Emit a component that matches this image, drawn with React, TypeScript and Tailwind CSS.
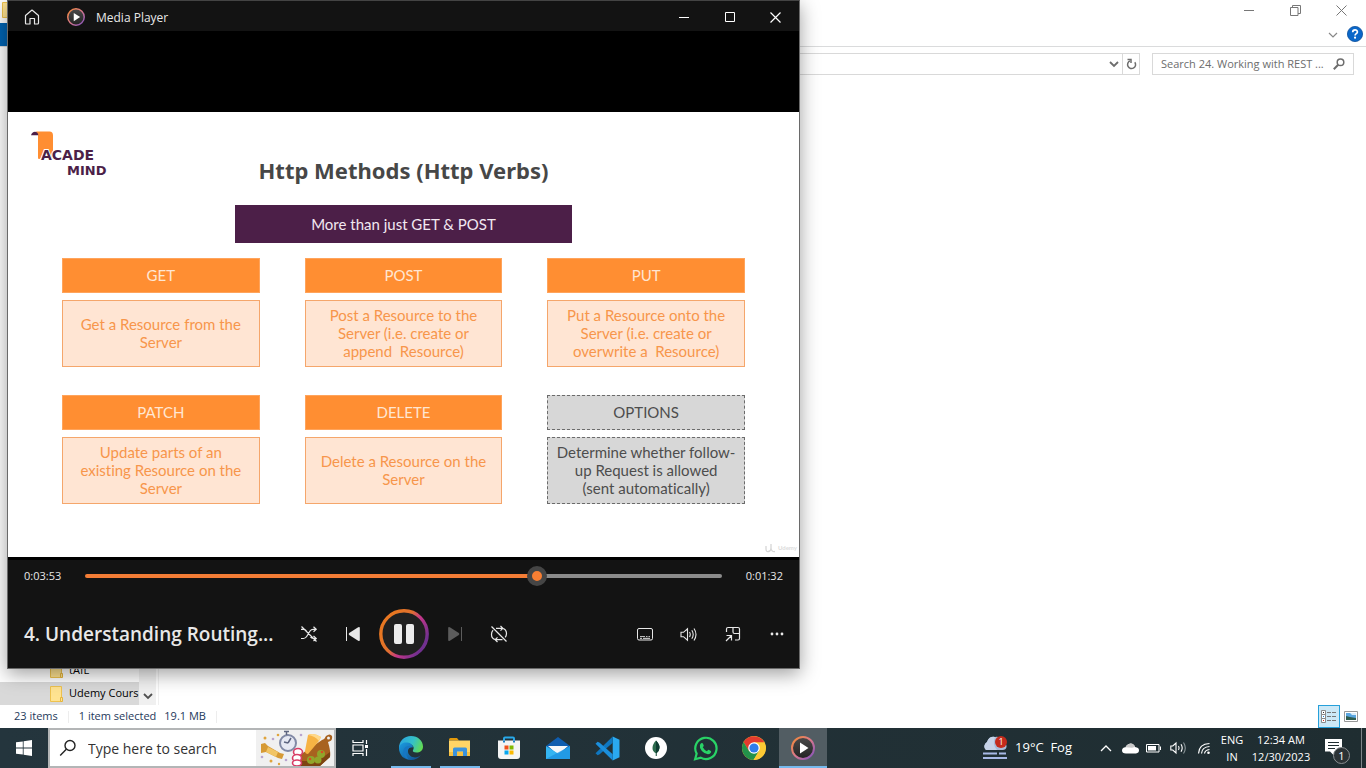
import React from "react";

const UI = "font-['Open_Sans','Noto_Sans',sans-serif]";

/* ---------- File Explorer ---------- */

function Folder() {
  return (
    <svg width="14" height="16" viewBox="0 0 14 16" className="shrink-0" aria-hidden="true">
      <path d="M.5.5h11v15H.5z" fill="#ffe391" stroke="#eec24e" />
      <path d="M10.5 11.5h2v4h-2z" fill="#ffe391" stroke="#e5b53c" />
    </svg>
  );
}

function Explorer() {
  return (
    <section aria-label="File Explorer" className="flex flex-1 flex-col bg-white text-[11px]">
      <header className="flex h-[23px] items-center pb-[3px] pl-[2px] pr-[2px]">
        <Folder />
        <div className="ml-auto flex text-[#777]">
          <button aria-label="Minimize" className="flex h-5 w-[46px] items-center justify-center">
            <svg width="10" height="10" stroke="currentColor"><path d="M0 5.5h10" /></svg>
          </button>
          <button aria-label="Restore" className="flex h-5 w-[46px] items-center justify-center">
            <svg width="11" height="11" stroke="currentColor" fill="none">
              <path d="M.5 2.500h7.500v8h-7.500zM2.500 2.500v-2h8v8h-2.500" />
            </svg>
          </button>
          <button aria-label="Close" className="flex h-5 w-[46px] items-center justify-center">
            <svg width="11" height="11" stroke="currentColor"><path d="M.5.5l10 10M10.500.5l-10 10" /></svg>
          </button>
        </div>
      </header>

      <div className="flex h-6 items-center border-b border-[#dadbdc] pr-[3px]">
        <button className="h-full w-14 bg-[#0063b1] text-white">File</button>
        <button aria-label="Expand the ribbon" className="ml-auto mr-[6px] flex size-4 items-center justify-center text-[#888]">
          <svg width="10" height="6" fill="none" stroke="currentColor" strokeWidth="1.200"><path d="M1 1l4 4 4-4" /></svg>
        </button>
        <button aria-label="Help" className="pb-[2px]">
          <svg width="16" height="16" viewBox="0 0 16 16">
            <circle cx="8" cy="8" r="7.600" fill="#0a67c9" stroke="#0b4f9c" strokeWidth=".8" />
            <path d="M5.700 6.200c0-3.200 4.700-3 4.700-.3 0 1.700-2.300 1.700-2.300 3.500" fill="none" stroke="#fff" strokeWidth="1.700" />
            <circle cx="8.050" cy="11.700" r="1.100" fill="#fff" />
          </svg>
        </button>
      </div>

      <div className="flex h-[34px] items-center gap-3 px-3 text-[#6d6d6d]">
        <div className="flex h-[22px] flex-1 items-center justify-end border border-[#d9d9d9]">
          <button aria-label="Previous locations" className="flex h-full w-4 items-center justify-center">
            <svg width="10" height="7" fill="none" stroke="currentColor" strokeWidth="1.800"><path d="M1 1l4 4 4-4" /></svg>
          </button>
          <button aria-label="Refresh" className="flex h-full w-[17px] items-center justify-center border-l border-[#d9d9d9]">
            <svg width="11" height="12" viewBox="0 0 11 12" fill="none" stroke="currentColor" strokeWidth="1.500">
              <path d="M8.800 4.200a4 4 0 1 1-4.800-1.300" />
              <path d="M5 5V1.500H1.500" />
            </svg>
          </button>
        </div>
        <div className="flex h-[22px] w-[202px] items-center border border-[#d9d9d9] pl-2 pr-2">
          <input
            aria-label="Search folder"
            placeholder="Search 24. Working with REST ..."
            className="h-full min-w-0 flex-1 bg-transparent pb-[2px] outline-none placeholder:text-[#6d6d6d]"
          />
          <svg width="12" height="12" viewBox="0 0 12 12" fill="none" stroke="currentColor" strokeWidth="1.500" aria-hidden="true">
            <circle cx="7.500" cy="4.300" r="3.300" />
            <path d="M5.200 6.700L.8 11.200" strokeWidth="2" />
          </svg>
        </div>
      </div>

      <div className="flex flex-1">
        <nav aria-label="Folders" className="flex w-[139px] flex-col justify-end text-black">
          <button className="flex h-6 items-center gap-[5px] pl-[50px]">
            <Folder />
            tAfL
          </button>
          <button className="flex h-[23px] items-center gap-[5px] whitespace-nowrap bg-[#d9d9d9] pl-[50px]">
            <Folder />
            Udemy Cours
          </button>
        </nav>
        <div className="flex w-[17px] items-end justify-center bg-[#f0f0f0] pb-[5px] text-[#505050]">
          <svg width="10" height="7" fill="none" stroke="currentColor" strokeWidth="1.800"><path d="M1 1l4 4 4-4" /></svg>
        </div>
        <main className="ml-[2px] flex-1 border-l border-[#f0f0f0]" />
      </div>

      <footer className="flex h-[23px] items-center pl-[14px] pr-2 text-[#1e395b]">
        <span>23 items</span>
        <span className="ml-[10px] h-3 w-px bg-[#ededed]" />
        <span className="ml-[10px]">1 item selected</span>
        <span className="ml-2">19.1 MB</span>
        <span className="ml-[10px] h-3 w-px bg-[#ededed]" />
        <button aria-label="Details view" className="ml-auto flex h-[23px] w-[22px] items-center justify-center border border-[#26a0da] bg-[#cce8f6]">
          <svg width="16" height="14" viewBox="0 0 16 14" fill="#fff">
            <path d="M.5.5h4v4h-4zM.5 4.500h4v4h-4zM.5 8.500h4v4h-4z" stroke="#8a8a8a" />
            <path d="M2 2h1v1h-1z" fill="#333" /><path d="M2 6h1v1h-1z" fill="#1b7ed0" /><path d="M2 10h1v1h-1z" fill="#d02b1b" />
            <path d="M6 2.500h4M11 2.500h4M6 6.500h4M11 6.500h4M6 10.500h4M11 10.500h4" stroke="#777" />
          </svg>
        </button>
        <button aria-label="Large icons view" className="ml-1">
          <svg width="14" height="11" viewBox="0 0 14 11">
            <path d="M.5.5h13v10h-13z" fill="#fff" stroke="#999" />
            <path d="M2 2h10v7H2z" fill="#5aa6e0" />
            <path d="M2 5l4 1 6 1v2H2z" fill="#2f5d4f" />
            <path d="M6 2h6v2L8 4z" fill="#d8ecfa" />
          </svg>
        </button>
      </footer>
    </section>
  );
}

/* ---------- Slide shown in the video ---------- */

type Method = { name: string; lines: string[]; muted?: boolean };

const methods: Method[] = [
  { name: "GET", lines: ["Get a Resource from the", "Server"] },
  { name: "POST", lines: ["Post a Resource to the", "Server (i.e. create or", "append  Resource)"] },
  { name: "PUT", lines: ["Put a Resource onto the", "Server (i.e. create or", "overwrite a  Resource)"] },
  { name: "PATCH", lines: ["Update parts of an", "existing Resource on the", "Server"] },
  { name: "DELETE", lines: ["Delete a Resource on the", "Server"] },
  { name: "OPTIONS", lines: ["Determine whether follow-", "up Request is allowed", "(sent automatically)"], muted: true },
];

function MethodCard({ name, lines, muted }: Method) {
  const head = muted
    ? "border border-dashed border-[#6b6b6b] bg-[#d7d7d7] text-[#4d4d4d]"
    : "border border-[#ffa45c] bg-[#ff8e32] text-[#ffe6d2]";
  const body = muted
    ? "border border-dashed border-[#6b6b6b] bg-[#d7d7d7] text-[#4d4d4d]"
    : "border border-[#f5a66b] bg-[#ffe5d3] text-[#f7964b]";
  return (
    <article className="flex flex-col gap-[7px] text-center">
      <h3 className={`flex h-[35px] items-center justify-center ${head}`}>{name}</h3>
      <p className={`flex h-[67px] flex-col items-center justify-center whitespace-pre pb-px leading-[18px] ${body}`}>
        {lines.map((line) => (
          <span key={line}>{line}</span>
        ))}
      </p>
    </article>
  );
}

function AcademindLogo() {
  return (
    <svg width="78" height="46" viewBox="0 0 78 46" role="img" aria-label="Academind">
      <path d="M5 .5h13.500q3.500 0 3.500 4V28l-3-2H11.500L8.500 28q-1.500.5-1.500-1.500V4z" fill="#ff8e32" />
      <path d="M0 4.300Q1 .8 4 .7q3 .1 3.300 3.600z" fill="#4c1f48" />
      <g fill="#4c1f48" fontFamily="DejaVu Sans" fontWeight="700" fontSize="13">
        <text x="10" y="29" fontSize="14" stroke="#fff" strokeWidth="2" paintOrder="stroke">ACADE</text>
        <text x="36" y="44">MIND</text>
      </g>
    </svg>
  );
}

function Slide() {
  return (
    <div className="relative flex aspect-video flex-col items-center bg-white pt-[19px] font-[Lato,sans-serif] text-[15px] [font-variant-ligatures:none]">
      <div className="grid h-[53px] w-full grid-cols-[1fr_auto_1fr] pl-[23px] pr-[23px]">
        <AcademindLogo />
        <h1 className="self-end font-['Noto_Sans',sans-serif] text-[22px] font-bold leading-[28px] text-[#474747]">
          Http Methods (Http Verbs)
        </h1>
      </div>
      <h2 className="mt-[21px] flex h-[38px] w-[337px] items-center justify-center bg-[#4c1f48] text-[#f2e8f1]">
        More than just GET &amp; POST
      </h2>
      <div className="mt-[15px] grid w-full grid-cols-3 gap-x-[45px] gap-y-7 px-[54px]">
        {methods.map((m) => (
          <MethodCard key={m.name} {...m} />
        ))}
      </div>
      <div className="absolute bottom-[3px] right-[2px] flex items-center gap-[2px] text-[#dcdcdc]">
        <svg width="11" height="10" viewBox="0 0 11 10" fill="none" stroke="#d6d6d6" strokeWidth="1.300">
          <path d="M1 3v3q0 3 2.500 2.500T6 5V1M6 5q.3 4 4 3.500" />
        </svg>
        <span className="text-[6px] font-bold leading-3">Udemy</span>
      </div>
    </div>
  );
}

/* ---------- Media Player ---------- */

function PlayerLogo({ size }: { size: number }) {
  return (
    <svg width={size} height={size} viewBox="0 0 24 24" aria-hidden="true">
      <defs>
        <linearGradient id="ring" x1="0" y1="0" x2="1" y2="1">
          <stop offset="0" stopColor="#f48a33" />
          <stop offset=".5" stopColor="#d9788c" />
          <stop offset="1" stopColor="#7b4fc0" />
        </linearGradient>
        <linearGradient id="disc" x1="0" y1="0" x2="0" y2="1">
          <stop offset="0" stopColor="#4a4a4a" />
          <stop offset="1" stopColor="#222" />
        </linearGradient>
      </defs>
      <circle cx="12" cy="12" r="11" fill="url(#disc)" stroke="url(#ring)" strokeWidth="2" />
      <path d="M9 6.500v11l8.500-5.500z" fill="#fff" />
    </svg>
  );
}

function CtlButton({ label, children, dim }: { label: string; children: React.ReactNode; dim?: boolean }) {
  return (
    <button aria-label={label} className={`flex h-11 w-11 items-center justify-center ${dim ? "text-[#5c5c5c]" : "text-[#e8e8e8]"}`}>
      {children}
    </button>
  );
}

function MediaPlayer() {
  return (
    <section
      aria-label="Media Player"
      className="absolute left-[7px] top-0 w-[58.05%] border border-[#6a6a6a] border-t-[#444] bg-black text-[#e8e8e8] shadow-[0_5px_18px_rgba(0,0,0,0.38)]"
    >
      <header className="flex h-[30px] items-center bg-[#131313] pt-[2px]">
        <button aria-label="Home" className="flex h-full w-12 items-center justify-center">
          <svg width="16" height="16" viewBox="0 0 16 16" fill="none" stroke="#e8e8e8" strokeWidth="1.200" strokeLinejoin="round">
            <path d="M1.500 6.500L8 1l6.500 5.500V14q0 1-1 1H10.500V9.500h-4.500V15H2.500q-1 0-1-1z" />
          </svg>
        </button>
        <div className="ml-[11px] flex items-center gap-[11px]">
          <PlayerLogo size={18} />
          <span className="pt-px text-xs leading-4">Media Player</span>
        </div>
        <div className="ml-auto flex h-full text-white">
          <button aria-label="Minimize" className="flex w-[46px] items-center justify-center">
            <svg width="10" height="10" stroke="currentColor"><path d="M0 5.500h10" /></svg>
          </button>
          <button aria-label="Maximize" className="flex w-[46px] items-center justify-center">
            <svg width="10" height="10" stroke="currentColor" fill="none"><path d="M.5.5h9v9h-9z" /></svg>
          </button>
          <button aria-label="Close" className="flex w-[46px] items-center justify-center">
            <svg width="11" height="11" stroke="currentColor" strokeWidth="1.200"><path d="M.5.500l10 10M10.500.5l-10 10" /></svg>
          </button>
        </div>
      </header>

      <div className="pb-[3px] pt-[81px]">
        <Slide />
      </div>

      <div className="bg-[#131313]">
        <div className="flex h-8 items-center px-4 text-[11px]">
          <span className="w-[61px]">0:03:53</span>
          <input
            type="range"
            aria-label="Seek"
            min={0}
            max={325}
            defaultValue={233}
            className="h-5 min-w-0 flex-1 appearance-none bg-transparent [&::-webkit-slider-runnable-track]:h-1 [&::-webkit-slider-runnable-track]:rounded-full [&::-webkit-slider-runnable-track]:bg-[linear-gradient(to_right,#f47d36_71%,#8b8b8b_71%)] [&::-webkit-slider-thumb]:mt-[-8px] [&::-webkit-slider-thumb]:size-5 [&::-webkit-slider-thumb]:appearance-none [&::-webkit-slider-thumb]:rounded-full [&::-webkit-slider-thumb]:border-[5px] [&::-webkit-slider-thumb]:border-[#454545] [&::-webkit-slider-thumb]:bg-[#f97f33]"
          />
          <span className="w-[61px] text-right">0:01:32</span>
        </div>

        <div className="grid h-[76px] grid-cols-[1fr_auto_1fr] items-center pt-[9px]">
          <h2 className="min-w-0 whitespace-nowrap pl-4 text-[19px] font-semibold leading-6">4. Understanding Routing...</h2>
          <div className="flex items-center pl-px">
            <CtlButton label="Shuffle off">
              <svg width="18" height="18" viewBox="0 0 18 18" fill="none" stroke="currentColor" strokeWidth="1.200">
                <path d="M1 13.500h2.500q2 0 3.500-2.500l3-5q1.200-1.700 3.200-1.700H16M13.500 1.800L16.200 4.300 13.500 6.800M1 4.300h2.500q2 0 3 1.700M10.500 12q1 1.500 2.800 1.500H16M13.500 11l2.700 2.500-2.700 2.500M1.500 1.500l15 15" />
              </svg>
            </CtlButton>
            <CtlButton label="Previous">
              <svg width="16" height="16" viewBox="0 0 16 16" fill="currentColor">
                <path d="M1 1h1v14H1z" />
                <path d="M13.200 1.200q1.600-.8 1.600.8v12q0 1.600-1.600.8L4.200 8.900q-1.100-.9 0-1.800z" />
              </svg>
            </CtlButton>
            <button aria-label="Pause" className="flex w-[58px] items-center justify-center">
              <svg width="50" height="50" viewBox="0 0 50 50">
                <defs>
                  <linearGradient id="pauseRing" x1=".15" y1=".3" x2=".9" y2=".75">
                    <stop offset="0" stopColor="#e87722" />
                    <stop offset=".35" stopColor="#e0702f" />
                    <stop offset=".6" stopColor="#c3368a" />
                    <stop offset="1" stopColor="#71308f" />
                  </linearGradient>
                </defs>
                <circle cx="25" cy="25" r="23.200" fill="#202020" stroke="url(#pauseRing)" strokeWidth="3.400" />
                <rect x="15" y="15" width="8" height="20" rx="2" fill="#ececec" />
                <rect x="27" y="15" width="8" height="20" rx="2" fill="#ececec" />
              </svg>
            </button>
            <CtlButton label="Next" dim>
              <svg width="16" height="16" viewBox="0 0 16 16" fill="currentColor">
                <path d="M14 1h1v14h-1z" />
                <path d="M2.800 1.200q-1.600-.8-1.600.8v12q0 1.600 1.600.8L11.800 8.900q1.100-.9 0-1.800z" />
              </svg>
            </CtlButton>
            <CtlButton label="Repeat off">
              <svg width="18" height="18" viewBox="0 0 18 18" fill="none" stroke="currentColor" strokeWidth="1.200">
                <path d="M6 3.300h6.500q4 1 4 5.200 0 2-1.300 3.800M10.500 1l2.300 2.300-2.300 2.300M12.500 14.700H5.500q-4-1-4-5.200 0-2.600 1.600-4.300M7.500 12.400l-2.300 2.300L7.500 17M1.500 1.500l15 15" />
              </svg>
            </CtlButton>
          </div>
          <div className="flex justify-end">
            <CtlButton label="Subtitles">
              <svg width="16" height="13" viewBox="0 0 16 13" fill="none" stroke="currentColor">
                <rect x=".5" y=".5" width="15" height="11.500" rx="1.500" />
                <path d="M3 8.500h5M9 8.500h1.500M11.500 8.500H13M3 10.300h2M6 10.300h7" strokeWidth="1.200" opacity=".8" />
              </svg>
            </CtlButton>
            <CtlButton label="Volume">
              <svg width="18" height="15" viewBox="0 0 18 15" fill="none" stroke="currentColor" strokeWidth="1.100">
                <path d="M1 5.300h2.500L7.500 1.800v11.400L3.500 9.700H1zM9.500 5q1.500 2.500 0 5M11.800 3.300q2.800 4.200 0 8.400M14 1.500q4 6 0 12" />
              </svg>
            </CtlButton>
            <CtlButton label="Mini player">
              <svg width="16" height="16" viewBox="0 0 16 16" fill="none" stroke="currentColor" strokeWidth="1.200">
                <path d="M1.500 6V3q0-1.500 1.500-1.500h10q1.500 0 1.500 1.500v9.500q0 1.500-1.500 1.500H10M8 1.500V6q0 1.500 1.500 1.500h5M1.500 9.500h5v5M6.500 9.500L1 15" />
              </svg>
            </CtlButton>
            <CtlButton label="More options">
              <svg width="14" height="4" viewBox="0 0 14 4" fill="currentColor">
                <circle cx="2" cy="2" r="1.400" /><circle cx="7" cy="2" r="1.400" /><circle cx="12" cy="2" r="1.400" />
              </svg>
            </CtlButton>
          </div>
        </div>
      </div>
    </section>
  );
}

/* ---------- Taskbar ---------- */

function SearchArt() {
  return (
    <svg width="78" height="36" viewBox="0 0 78 36" aria-hidden="true" className="shrink-0">
      <path d="M0 0h78v36H0z" fill="#f0f0f0" />
      <path d="M38 29L66 10q3-1 4-4 4-3 6 0 1 5-4 6 3 10 2 15L64 36H39z" fill="#a8621f" />
      <path d="M38 29l2 7h24l10-9v-5L62 31H42z" fill="#7d4412" />
      <circle cx="72.500" cy="8" r="1.500" fill="#f0f0f0" />
      <path d="M52 5q5-3 13 2l-2 4-11 13q-3 0-3-3z" fill="#f7b344" />
      <path d="M52 5q7 1 11 6l2-4q-7-5-13-2z" fill="#ffd98a" />
      <circle cx="32" cy="13" r="8" fill="#e6e9f3" stroke="#8189a5" strokeWidth="2" />
      <path d="M28 1.500h5M30.500 1v4M32 13l3-5M32 13l-4-1" stroke="#5d6580" strokeWidth="1.500" />
      <path d="M5 14l4-1 3 3 12 7 4 1-2 5-4-1-12-6-5 1z" fill="#d69a35" />
      <path d="M12 17l10 5-2 5-10-5z" fill="#f1c566" />
      <g fill="#fff" stroke="#d83b64" strokeWidth="1.600">
        <ellipse cx="42" cy="22" rx="4.500" ry="3.500" /><ellipse cx="41" cy="28" rx="4.500" ry="3.500" /><ellipse cx="41" cy="33" rx="4.500" ry="3" />
      </g>
      <g fill="#91a52b">
        <circle cx="55" cy="30" r="4" /><circle cx="65" cy="24" r="4" /><circle cx="62" cy="30" r="3.500" />
      </g>
      <g fill="#d94a24"><circle cx="54" cy="29" r="1.300" /><circle cx="66" cy="22" r="1.300" /></g>
      <g fill="#e0a43c"><circle cx="9" cy="8" r="1.500" /><circle cx="22" cy="5" r="1.300" /><circle cx="15" cy="31" r="1.500" /><circle cx="23" cy="34" r="1.200" /></g>
      <g fill="#b9a4cf"><circle cx="17" cy="9" r="1.300" /><circle cx="6" cy="27" r="1.300" /><circle cx="30" cy="30" r="1.300" /><circle cx="45" cy="5" r="1.300" /></g>
    </svg>
  );
}

const Edge = () => (
  <svg width="26" height="26" viewBox="0 0 26 26">
    <defs>
      <linearGradient id="edgeTop" x1="0" y1=".3" x2="1" y2=".6"><stop offset="0" stopColor="#2aa5e0" /><stop offset=".55" stopColor="#35c1c8" /><stop offset="1" stopColor="#63dc50" /></linearGradient>
      <linearGradient id="edgeLow" x1="0" y1="0" x2="1" y2="1"><stop offset="0" stopColor="#1b9de2" /><stop offset="1" stopColor="#114a8b" /></linearGradient>
    </defs>
    <path d="M1 13C1 6 6 1 13 1s12 5 12 10.500c0 4-3 6-6.500 6-3 0-4.300-1.200-3.500-2.300 2-3-.5-6.200-4.500-6.200C5 9 1.500 12 1 16z" fill="url(#edgeTop)" />
    <path d="M1 13c.5-4 4.500-6 8.500-5.500 3 .4 5.500 2.500 5.500 5-5-2-7 5-2.500 8.500 3.500 2.500 8 1.500 10.500-1C20.500 23.500 17 25 13 25 6 25 1 20 1 13z" fill="url(#edgeLow)" />
    <path d="M15 12.500c-6-1.500-9 6-4.500 12C6 23 4.500 18.500 5.500 15c1.200-4 6-5.500 9.500-2.500z" fill="#1677c4" />
  </svg>
);

const Files = () => (
  <svg width="24" height="22" viewBox="0 0 24 22">
    <path d="M1 4V2.500Q1 1 2.500 1H9l2 2.500H1z" fill="#e39a0b" />
    <path d="M1 3.500h21v15.500H1z" fill="#ffd566" />
    <path d="M1 15h21v4H1z" fill="#f6c140" />
    <path d="M5 19v-7q0-1.500 1.500-1.500h11Q19 10.500 19 12v7h-4v-4.500H9V19z" fill="#3a93dc" />
  </svg>
);

const Store = () => (
  <svg width="24" height="24" viewBox="0 0 24 24">
    <path d="M7 6V2.500Q7 1.500 8 1.500h8q1 0 1 1V6" fill="none" stroke="#28a8e8" strokeWidth="2" />
    <path d="M1 4.500h22V20q0 3-3 3H4q-3 0-3-3z" fill="#f4f4f4" />
    <path d="M7 4.500v2M17 4.500v2" stroke="#1b7fc4" strokeWidth="2" />
    <path d="M7.500 9.500h4v4h-4z" fill="#f1511b" /><path d="M12.500 9.500h4v4h-4z" fill="#80b900" />
    <path d="M7.500 14.500h4v4h-4z" fill="#05a6f0" /><path d="M12.500 14.500h4v4h-4z" fill="#fbb900" />
  </svg>
);

const Mail = () => (
  <svg width="26" height="24" viewBox="0 0 26 24">
    <path d="M1 10L13 1l12 9-4 5H5z" fill="#0f5db0" />
    <path d="M3 10h20l-10 9z" fill="#f5f7fa" />
    <path d="M1 10l12 7.500L25 10v13H1z" fill="#35b5f2" />
    <path d="M1 23L25 10v13z" fill="#1b8fe0" opacity=".7" />
  </svg>
);

const Code = () => (
  <svg width="25" height="25" viewBox="0 0 24 24">
    <path d="M17 0.500L23.500 3.500v17L17 23.500z" fill="#2aa9f0" />
    <path d="M17 .5v6L4.500 17.500 2.500 18.500.5 16.500z" fill="#0f77c0" />
    <path d="M17 23.500v-6L4.500 6.500 2.500 5.500.5 7.500z" fill="#1b8fdc" />
  </svg>
);

const Mongo = () => (
  <svg width="24" height="24" viewBox="0 0 24 24">
    <circle cx="12" cy="12" r="11" fill="#fff" />
    <path d="M12 4.500q4 4 3.500 7.500-.3 3.500-3 5.200V20h-.8v-2.800Q8.500 15.500 8.500 12 8.500 8 12 4.500z" fill="#2c6b4c" />
    <path d="M12 4.500v15.500h.5v-2.800q2.700-1.700 3-5.200Q16 8.500 12 4.500z" fill="#0f3d33" />
  </svg>
);

const WhatsApp = () => (
  <svg width="25" height="25" viewBox="0 0 24 24">
    <path d="M2 22.300l1.500-5.400A10.200 10.200 0 1 1 7.400 20.800z" fill="none" stroke="#29d366" strokeWidth="2.100" />
    <path d="M8.300 6.700q.9-.3 1.300.7l.7 1.700q.2.500-.9 1.700 1.400 2.700 4 3.800.9-1.200 1.400-1.400.3 0 2.300 1.100.6.500.1 1.600-.8 1.700-2.900 1.600-3.200-.4-5.800-3.200Q6 11.500 6.600 8.800q.5-1.600 1.700-2.100z" fill="#29d366" />
  </svg>
);

const Chrome = () => (
  <svg width="24" height="24" viewBox="0 0 24 24">
    <circle cx="12" cy="12" r="12" fill="#fcc934" />
    <path d="M1.600 6A12 12 0 0 1 22.400 6.500H12L6.800 15z" fill="#e33b2e" />
    <path d="M1.600 6A12 12 0 0 0 11.500 24L17 15l-10 0z" fill="#23924a" />
    <path d="M12 6.500h10.400A12 12 0 0 1 11.500 24L17 15z" fill="#fcc934" />
    <circle cx="12" cy="12" r="5.800" fill="#fff" />
    <circle cx="12" cy="12" r="4.600" fill="#2f7de9" />
  </svg>
);

const apps = [
  { name: "Microsoft Edge", icon: <Edge />, state: "open" },
  { name: "File Explorer", icon: <Files />, state: "open" },
  { name: "Microsoft Store", icon: <Store />, state: "idle" },
  { name: "Mail", icon: <Mail />, state: "idle" },
  { name: "Visual Studio Code", icon: <Code />, state: "idle" },
  { name: "MongoDB Compass", icon: <Mongo />, state: "idle" },
  { name: "WhatsApp", icon: <WhatsApp />, state: "idle" },
  { name: "Google Chrome", icon: <Chrome />, state: "idle" },
  { name: "Media Player", icon: <PlayerLogo size={24} />, state: "active" },
];

function Taskbar() {
  return (
    <footer className="flex h-10 items-stretch bg-linear-to-r from-[#24353d] to-[#1f2d31] text-white">
      <button aria-label="Start" className="flex w-12 items-center justify-center">
        <svg width="16" height="16" viewBox="0 0 16 16" fill="#fff">
          <path d="M0 2.300l6.800-.9v6.200H0zM7.600 1.300L16 0v7.600H7.600zM0 8.400h6.800v6.200L0 13.700zM7.600 8.400H16V16l-8.400-1.200z" />
        </svg>
      </button>
      <label className="flex w-72 items-center border-2 border-[#b3b5b6] bg-white text-[#2b2b2b]">
        <svg width="18" height="18" viewBox="0 0 18 18" fill="none" stroke="#222" strokeWidth="1.400" className="ml-[9px] shrink-0" aria-hidden="true">
          <circle cx="11" cy="6.500" r="5" />
          <path d="M7.300 10.200L1.200 16.500" />
        </svg>
        <input
          aria-label="Type here to search"
          placeholder="Type here to search"
          className="ml-[11px] h-full min-w-0 flex-1 bg-transparent text-sm outline-none placeholder:text-[#333]"
        />
        <SearchArt />
      </label>
      <button aria-label="Task View" className="flex w-12 items-center justify-center">
        <svg width="17" height="16" viewBox="0 0 17 16" fill="none" stroke="#fff" strokeWidth="1.200">
          <path d="M1 0v2.500h10V0M1 16v-2.500h10V16M1 5h10v6H1zM14.500 0v4M14.500 9v7" />
          <path d="M13 5h3v3h-3z" fill="#fff" stroke="none" />
        </svg>
      </button>
      <div className="ml-[3px] flex gap-px">
        {apps.map((app) => (
          <button
            key={app.name}
            aria-label={app.name}
            className={
              app.state === "active"
                ? "flex w-12 flex-col items-center bg-[#525d63]"
                : "flex w-12 flex-col items-center"
            }
          >
            <span className="flex h-[38px] items-center pt-[2px]">{app.icon}</span>
            {app.state === "active" && <span className="h-[2px] w-full bg-[#76b9ed]" />}
            {app.state === "open" && <span className="h-[2px] w-10 bg-[#76b9ed]" />}
          </button>
        ))}
      </div>

      <div className="ml-auto flex items-center pr-1">
        <button className="mr-[22px] flex items-center gap-[7px] whitespace-pre text-[13px]">
          <svg width="26" height="26" viewBox="0 0 26 26" aria-hidden="true">
            <path d="M4 15a5 5 0 0 1 1-8q2-6 8-5 6-1 7 5 5 1 4.500 5-.5 3-4 3z" fill="#a9bbd8" />
            <path d="M4 15q-4-4 1-8 2-6 8-5-3 8 2 13z" fill="#c6d3e8" />
            <path d="M1 18.500h14M17 18.500h7M1 23h24" stroke="#a8b9e6" strokeWidth="2" />
            <circle cx="19" cy="7" r="6" fill="#c42b1c" />
            <text x="19" y="10" fontSize="9" fill="#fff" textAnchor="middle" fontFamily="Open Sans">1</text>
          </svg>
          19°C  Fog
        </button>
        <button aria-label="Show hidden icons" className="flex w-6 justify-center">
          <svg width="12" height="8" fill="none" stroke="#fff" strokeWidth="1.300"><path d="M1 7l5-5 5 5" /></svg>
        </button>
        <button aria-label="OneDrive" className="flex w-6 justify-center">
          <svg width="17" height="11" viewBox="0 0 17 11">
            <path d="M4 10.500q-4 0-4-3t3.500-3.200Q5 1 8.500.5 12 .5 13 4q4 .5 4 3.300t-3 3.200z" fill="#fff" />
            <path d="M3.500 4.300Q5 1 8.500.5 12 .5 13 4l-3 .8z" fill="#c8c8c8" />
          </svg>
        </button>
        <button aria-label="Battery" className="flex w-6 justify-center">
          <svg width="16" height="10" viewBox="0 0 16 10" fill="none" stroke="#fff">
            <path d="M.5 1.500h12.500v7.500H.5zM14.500 3.500v3.500" />
            <path d="M2 3h8v4.500H2z" fill="#fff" stroke="none" />
          </svg>
        </button>
        <button aria-label="Volume" className="flex w-6 justify-center">
          <svg width="17" height="14" viewBox="0 0 17 14" fill="none" stroke="#fff" strokeWidth="1.100">
            <path d="M.8 5h2L6 2v10L2.800 9h-2zM8.500 5q1.200 2 0 4M11 3.300q2.400 3.700 0 7.400" />
            <path d="M13.500 1.500q3.600 5.500 0 11" stroke="#8d979b" />
          </svg>
        </button>
        <button aria-label="Network" className="flex w-7 justify-center">
          <svg width="14" height="14" viewBox="0 0 14 14" fill="none" stroke="#fff" strokeWidth="1.200">
            <path d="M1.500 12.500Q2 3 12.500 2.500M4.500 12.500Q5 6 12.500 5.500M7.500 12.500Q8 9 12.500 8.500" />
            <circle cx="11.500" cy="11.800" r="1.300" fill="#fff" stroke="none" />
          </svg>
        </button>
        <button className="w-7 text-center text-[11px] leading-[17px]">
          <span className="block">ENG</span>
          <span className="block">IN</span>
        </button>
        <button className="w-[70px] whitespace-nowrap text-center text-[11px] leading-[17px]">
          <span className="block">12:34 AM</span>
          <span className="block">12/30/2023</span>
        </button>
        <button aria-label="Notifications" className="relative ml-[9px] flex h-10 w-9 items-center pb-[2px]">
          <svg width="17" height="17" viewBox="0 0 17 17" aria-hidden="true">
            <path d="M0 0h17v12.500H9.500V17L5 12.500H0z" fill="#fff" />
            <path d="M3 3.500h11M3 6.500h11M3 9.500h7" stroke="#1f2d31" strokeWidth="1.200" />
          </svg>
          <span className="absolute bottom-1 left-2 flex size-[17px] items-center justify-center rounded-full border border-[#8a8f92] bg-[#2b3235] text-[11px] leading-none">
            1
          </span>
        </button>
        <span className="h-10 w-px bg-[#7d868a]" />
      </div>
    </footer>
  );
}

export default function App() {
  return (
    <div className={`relative flex min-h-screen flex-col overflow-hidden ${UI}`}>
      <Explorer />
      <Taskbar />
      <MediaPlayer />
    </div>
  );
}
